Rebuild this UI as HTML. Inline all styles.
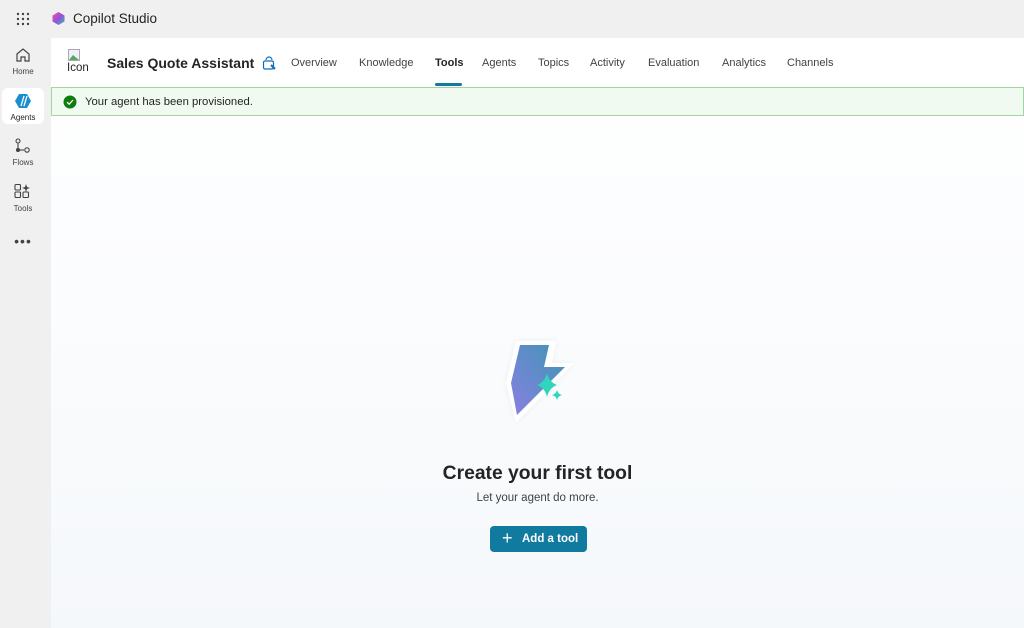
<!DOCTYPE html>
<html><head><style>
*{margin:0;padding:0;box-sizing:border-box}
body{width:1024px;height:628px;overflow:hidden;font-family:"Liberation Sans",sans-serif;background:#f0f0f0;position:relative;color:#242424}
.top{position:absolute;left:0;top:0;width:1024px;height:38px;background:#f0f0f0}
.rail{position:absolute;left:0;top:38px;width:51px;height:590px;background:#f0f0f0}
.ri{position:absolute;left:0;width:46px;text-align:center;font-size:8px;color:#424242}
.main{position:absolute;left:51px;top:38px;width:973px;height:590px;background:linear-gradient(#fff,#f5f8fb);border-top-left-radius:4px}
.hdr{position:absolute;left:0;top:0;width:973px;height:49px;background:#fff}
.tab{position:absolute;top:19px;font-size:11px;color:#424242}
.banner{position:absolute;left:0;top:49px;width:973px;height:29px;background:#f1faf1;border:1px solid #9fd89f;font-size:11.3px;color:#242424}
</style></head><body>
<div class="top">
<svg style="position:absolute;left:16px;top:12px" width="14" height="14"><g fill="#424242"><circle cx="2" cy="2" r="1.2"/><circle cx="7" cy="2" r="1.2"/><circle cx="12" cy="2" r="1.2"/><circle cx="2" cy="7" r="1.2"/><circle cx="7" cy="7" r="1.2"/><circle cx="12" cy="7" r="1.2"/><circle cx="2" cy="12" r="1.2"/><circle cx="7" cy="12" r="1.2"/><circle cx="12" cy="12" r="1.2"/></g></svg>
<svg style="position:absolute;left:51px;top:11px" width="15" height="15"><defs><linearGradient id="c" x1="0" y1="0" x2="1" y2="1"><stop offset="0" stop-color="#f25c8a"/><stop offset=".5" stop-color="#9b4de0"/><stop offset="1" stop-color="#2ec4a9"/></linearGradient></defs><path d="M7.5 1 L13.5 4.5 L13.5 10.5 L7.5 14 L1.5 10.5 L1.5 4.5Z" fill="url(#c)"/></svg>
<div style="position:absolute;left:73px;top:11px;font-size:13.5px;color:#242424">Copilot Studio</div>
</div>
<div class="rail">
<svg style="position:absolute;left:15px;top:9px" width="16" height="16" fill="none" stroke="#424242" stroke-width="1.2"><path d="M2 7 L8 2 L14 7 V14 H10 V10 H6 V14 H2Z"/></svg>
<div class="ri" style="top:29px">Home</div>
<div style="position:absolute;left:2px;top:50px;width:42px;height:36px;background:#fff;border-radius:6px"></div>
<svg style="position:absolute;left:15px;top:55px" width="16" height="16"><path d="M4 1 H12 L16 8 L12 15 H4 L0 8Z" fill="#1a8fd0"/><path d="M6 13 L9 3 M9 13 L12 3" stroke="#fff" stroke-width="1.3"/></svg>
<div class="ri" style="top:75px;color:#242424">Agents</div>
<svg style="position:absolute;left:14px;top:100px" width="18" height="16" fill="none" stroke="#424242" stroke-width="1.1"><circle cx="4" cy="3" r="2"/><path d="M4 5 V11"/><circle cx="4" cy="12" r="1.5" fill="#424242"/><path d="M4 12 H10"/><circle cx="13" cy="12" r="2.2"/></svg>
<div class="ri" style="top:120px">Flows</div>
<svg style="position:absolute;left:14px;top:145px" width="18" height="16" fill="none" stroke="#424242" stroke-width="1.1"><rect x="1" y="1.5" width="5.5" height="5.5" rx="1"/><rect x="1" y="9" width="5.5" height="5.5" rx="1"/><rect x="9" y="9" width="5.5" height="5.5" rx="1"/><path d="M12 1 L13 4 L16 5 L13 6 L12 9 L11 6 L8 5 L11 4Z" fill="#424242" stroke="none"/></svg>
<div class="ri" style="top:166px">Tools</div>
<div class="ri" style="top:195px;font-size:14px;letter-spacing:1px">•••</div>
</div>
<div class="main">
<div class="hdr">
<svg style="position:absolute;left:17px;top:11px" width="12" height="12"><rect x=".5" y=".5" width="11" height="11" fill="#eef" stroke="#aaa"/><path d="M1 11 L5 6 L11 11Z" fill="#5a5"/></svg>
<div style="position:absolute;left:16px;top:24px;font-size:11.5px;color:#242424">Icon</div>
<div style="position:absolute;left:56px;top:17px;font-size:14px;font-weight:bold">Sales Quote Assistant</div>
<svg style="position:absolute;left:211px;top:18px" width="14" height="15" fill="none" stroke="#0f6cbd" stroke-width="1.2"><path d="M4 4 A3 3 0 0 1 10 4"/><rect x="1.5" y="5" width="10" height="8" rx="1.5"/><path d="M9 9 L13 13" stroke-width="2"/></svg>
<div class="tab" style="left:240px">Overview</div>
<div class="tab" style="left:308px">Knowledge</div>
<div class="tab" style="left:384px;font-weight:bold;color:#242424">Tools</div>
<div style="position:absolute;left:384px;top:45px;width:27px;height:3px;background:#117a9f;border-radius:2px"></div>
<div class="tab" style="left:431px">Agents</div>
<div class="tab" style="left:487px">Topics</div>
<div class="tab" style="left:539px">Activity</div>
<div class="tab" style="left:597px">Evaluation</div>
<div class="tab" style="left:671px">Analytics</div>
<div class="tab" style="left:736px">Channels</div>
</div>
<div class="banner">
<svg style="position:absolute;left:11px;top:7px" width="14" height="14"><circle cx="7" cy="7" r="6.5" fill="#107c10"/><path d="M4 7.2 L6.2 9.2 L10 5" stroke="#fff" stroke-width="1.3" fill="none"/></svg>
<div style="position:absolute;left:33px;top:8px">Your agent has been provisioned.</div>
</div>
<svg style="position:absolute;left:441px;top:295px" width="110" height="100"><defs><linearGradient id="b" x1="1" y1="0" x2="0" y2="1"><stop offset="0" stop-color="#3e96b4"/><stop offset="1" stop-color="#8a7fe2"/></linearGradient><filter id="s" x="-30%" y="-30%" width="160%" height="160%"><feGaussianBlur stdDeviation="3"/></filter></defs>
<path d="M24 8 H64 L60 30 H82 L24 90 L14 50Z" fill="#e6ecf0" filter="url(#s)" opacity=".8"/>
<path d="M24 8 H64 L60 30 H82 L24 90 L14 50Z" fill="#fff"/>
<path d="M28 12 H57 L52 34 H73 L25 82 L19 50Z" fill="url(#b)"/>
<path d="M55 40 Q57 49 65 52 Q57 55 55 64 Q53 55 45 52 Q53 49 55 40Z" fill="#2fd5bd"/>
<path d="M65 57 Q66 61 70 62 Q66 63 65 67 Q64 63 60 62 Q64 61 65 57Z" fill="#2fd5bd"/></svg>
<div style="position:absolute;left:0;width:973px;top:425px;text-align:center;font-size:19.3px;font-weight:bold">Create your first tool</div>
<div style="position:absolute;left:0;width:973px;top:454px;text-align:center;font-size:11.5px;color:#424242">Let your agent do more.</div>
<div style="position:absolute;left:439px;top:488px;width:97px;height:26px;background:#117a9f;border-radius:4px;color:#fff;font-size:11.5px;font-weight:bold;line-height:26px;padding-left:32px">Add a tool</div>
<div style="position:absolute;left:451px;top:490px;color:#fff;font-size:18px;line-height:20px">+</div>
</div>
</body></html>
